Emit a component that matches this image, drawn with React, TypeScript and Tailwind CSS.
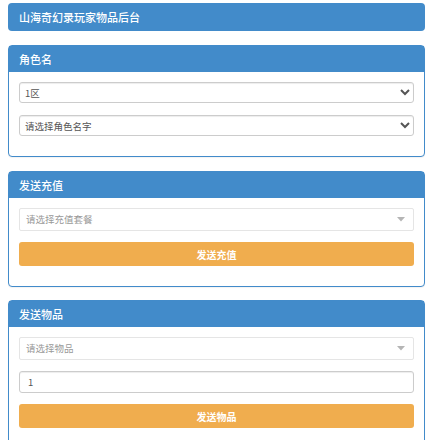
import React from "react";

const font = "font-['Noto_Sans_CJK_SC','Noto_Sans',sans-serif]";

function Panel({ title, children, className = "" }: { title: string; children: React.ReactNode; className?: string }) {
  return (
    <div className={`border border-[#428bca] rounded-[4px] bg-white shadow-[0_1px_1px_rgba(0,0,0,0.05)] ${className}`}>
      <div className="h-[26px] bg-[#428bca] text-white text-[11px] font-medium flex items-center px-[10px]">{title}</div>
      <div className="px-[10px] pt-[10px] pb-[20px] flex flex-col">{children}</div>
    </div>
  );
}

function NativeSelect({ value, className = "" }: { value: string; className?: string }) {
  return (
    <select
      defaultValue={value}
      className={`h-[21px] w-full border border-[#ccc] rounded-[3px] bg-white text-[9.5px] text-[#555] pl-[1px] pr-[4px] shadow-[inset_0_1px_1px_rgba(0,0,0,0.075)] ${className}`}
    >
      <option value={value}>{value}</option>
    </select>
  );
}

function Select2({ placeholder }: { placeholder: string }) {
  return (
    <div className="h-[23px] w-full border border-[#e5e5e5] rounded-[2px] bg-white flex items-center justify-between pl-[6px] pr-[8px]">
      <span className="text-[9.5px] text-[#999]">{placeholder}</span>
      <svg width="8" height="5" viewBox="0 0 8 5">
        <path d="M0 0 L8 0 L4 4.5 Z" fill="#b5b5b5" />
      </svg>
    </div>
  );
}

function Button({ label }: { label: string }) {
  return (
    <button className="h-[24px] w-full rounded-[3px] bg-[#f0ad4e] text-white text-[10px] font-bold flex items-center justify-center">
      {label}
    </button>
  );
}

export default function App() {
  return (
    <div className={`${font} bg-white min-h-[440px] pl-2 pr-[6px] pt-[3px]`}>
      <div className="h-[28px] bg-[#428bca] rounded-[4px] text-white text-[11px] font-medium flex items-center px-[11px]">
        山海奇幻录玩家物品后台
      </div>

      <Panel title="角色名" className="mt-[14px]">
        <NativeSelect value="1区" />
        <NativeSelect value="请选择角色名字" className="mt-[12px]" />
      </Panel>

      <Panel title="发送充值" className="mt-[14px]">
        <Select2 placeholder="请选择充值套餐" />
        <div className="mt-[11px]">
          <Button label="发送充值" />
        </div>
      </Panel>

      <Panel title="发送物品" className="mt-[13px]">
        <Select2 placeholder="请选择物品" />
        <input
          defaultValue="1"
          className="mt-[11px] h-[22px] w-full border border-[#ccc] rounded-[3px] bg-white text-[9.5px] text-[#555] px-[8px] shadow-[inset_0_1px_1px_rgba(0,0,0,0.075)] outline-none"
        />
        <div className="mt-[11px]">
          <Button label="发送物品" />
        </div>
      </Panel>
    </div>
  );
}
